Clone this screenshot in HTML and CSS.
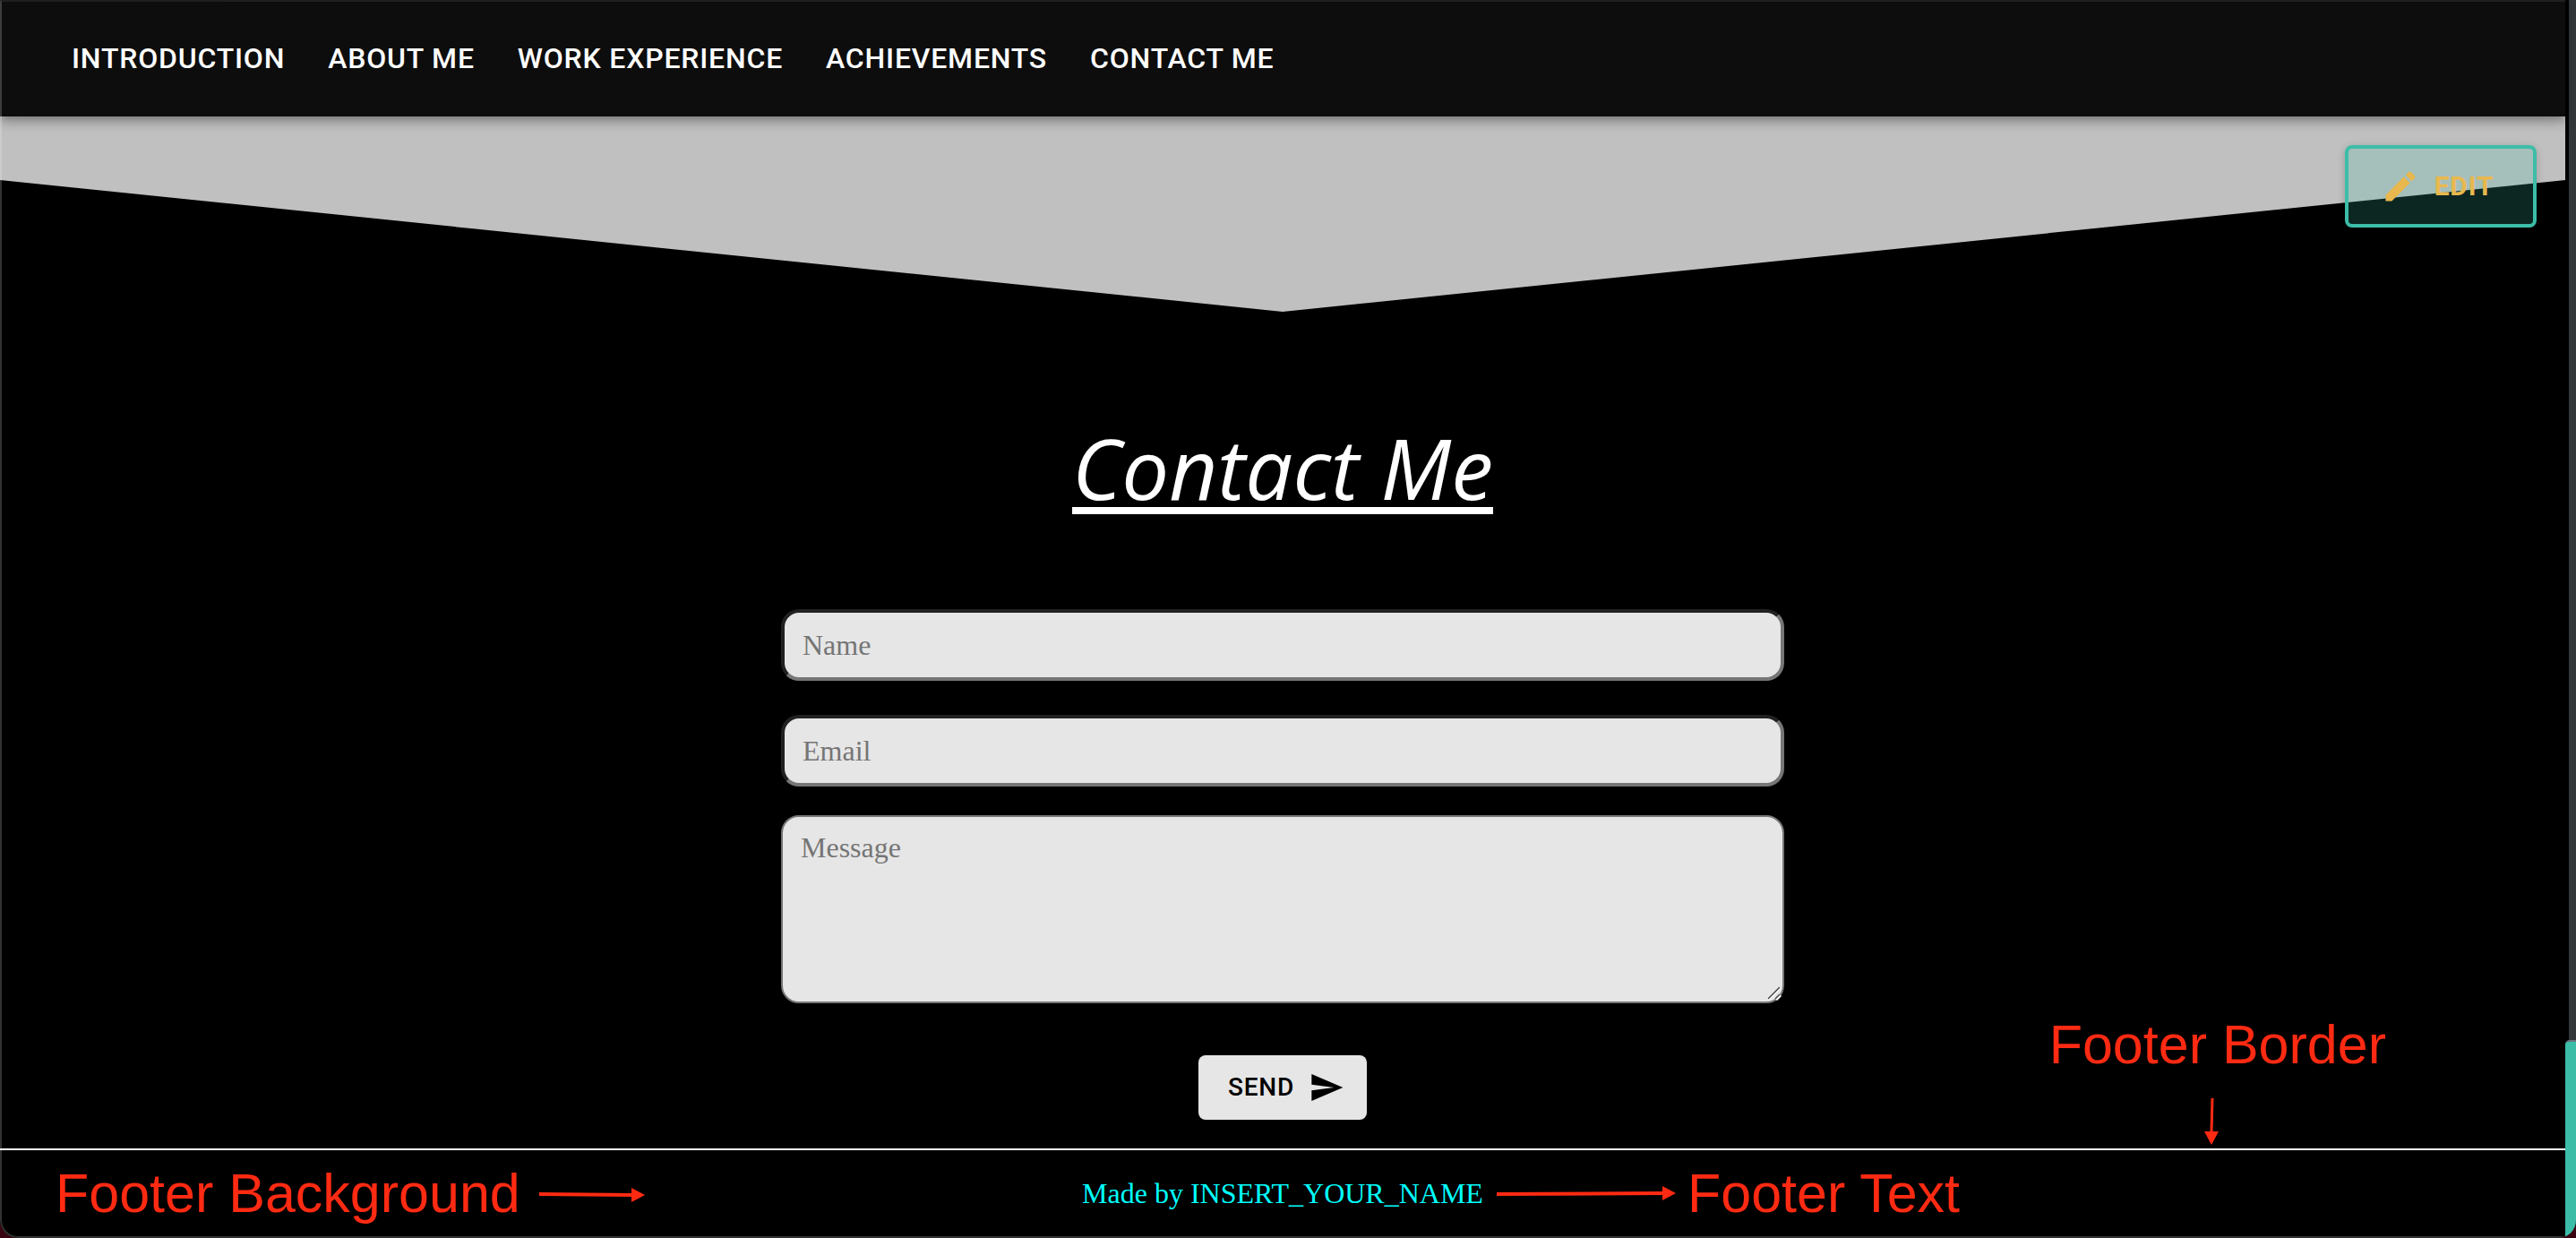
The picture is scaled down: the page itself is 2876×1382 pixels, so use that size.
FILE: index.html
```html
<!DOCTYPE html>
<html lang="en">
<head>
<meta charset="utf-8">
<title>Contact Me</title>
<link rel="stylesheet" href="styles.css">
</head>
<body>
<div class="window">
  <div class="page">
    <header class="navbar">
      <nav class="nav-links">
        <a href="#introduction">INTRODUCTION</a>
        <a href="#about">ABOUT ME</a>
        <a href="#work">WORK EXPERIENCE</a>
        <a href="#achievements">ACHIEVEMENTS</a>
        <a href="#contact">CONTACT ME</a>
      </nav>
    </header>

    <main class="contact" id="contact">
      <svg class="divider" viewBox="0 0 2864 218" preserveAspectRatio="none" aria-hidden="true">
        <path d="M0 0H2864V71L1432 218L0 71Z" fill="#c0c0c0"/>
      </svg>
      <button class="edit-button" type="button">
        <svg class="edit-icon" viewBox="0 0 24 24" aria-hidden="true"><path fill="currentColor" d="M3 17.250V21h3.750L17.810 9.940l-3.750-3.750L3 17.250zM20.710 7.040c.39-.39.39-1.020 0-1.410l-2.340-2.340a.996.996 0 0 0-1.410 0l-1.830 1.830 3.750 3.750 1.830-1.830z"/></svg>
        EDIT
      </button>

      <h1 class="title">Contact Me</h1>

      <form class="contact-form">
        <input class="field" type="text" name="name" placeholder="Name" aria-label="Name">
        <input class="field" type="email" name="email" placeholder="Email" aria-label="Email">
        <div class="message-box">
          <textarea class="field message" name="message" placeholder="Message" aria-label="Message"></textarea>
          <svg class="grip" viewBox="0 0 16 16" aria-hidden="true"><path d="M1 15L15 1M10 15L15 10" stroke="#fff" stroke-width="3"/><path d="M1 14L14 1M9 14L14 9" stroke="#444" stroke-width="1.500"/></svg>
        </div>
        <button class="send-button" type="submit">
          SEND
          <svg class="send-icon" viewBox="0 0 24 24" aria-hidden="true"><path fill="currentColor" d="M2.010 21L23 12 2.010 3 2 10l15 2-15 2z"/></svg>
        </button>
      </form>
    </main>

    <footer class="footer">
      <p class="credit">Made by INSERT_YOUR_NAME</p>

      <span class="note note-background">Footer Background</span>
      <svg class="arrow arrow-background" viewBox="0 0 118 16" aria-hidden="true"><path d="M0 7L104 8" stroke="currentColor" stroke-width="4"/><path d="M103 0L118 8L103 16Z" fill="currentColor"/></svg>

      <svg class="arrow arrow-text" viewBox="0 0 200 16" aria-hidden="true"><path d="M0 9L186 8" stroke="currentColor" stroke-width="4"/><path d="M185 0L200 8L185 16Z" fill="currentColor"/></svg>
      <span class="note note-text">Footer Text</span>

      <span class="note note-border">Footer Border</span>
      <svg class="arrow arrow-border" viewBox="0 0 16 52" aria-hidden="true"><path d="M9 0L8 38" stroke="currentColor" stroke-width="3"/><path d="M0 37H16L8 52Z" fill="currentColor"/></svg>
    </footer>
  </div>

  <div class="scrollbar" aria-hidden="true"><div class="thumb"></div></div>
</div>
</body>
</html>
```
FILE: styles.css
```css
* {
  box-sizing: border-box;
}

body {
  margin: 0;
  background: #3a0512;
}

.window {
  position: relative;
  display: grid;
  grid-template-columns: 1fr 12px;
  min-height: 100vh;
  overflow: hidden;
  background: #000;
  border-radius: 0 0 20px 20px;
}

/* thin light rim round the window */
.window::after {
  content: "";
  position: absolute;
  z-index: 2;
  inset: 0 12px 0 0;
  border: 2px solid rgba(255, 255, 255, 0.2);
  border-top-color: rgba(255, 255, 255, 0.08);
  border-right: 0;
  border-bottom-left-radius: 20px;
  pointer-events: none;
}

.page {
  display: flex;
  flex-direction: column;
}

.navbar {
  position: relative;
  z-index: 1;
  display: flex;
  align-items: center;
  height: 130px;
  padding: 0 80px;
  background: #0d0d0d;
  box-shadow: 0 4px 8px -2px rgba(0, 0, 0, 0.2), 0 8px 10px rgba(0, 0, 0, 0.14), 0 2px 20px rgba(0, 0, 0, 0.12);
}

.nav-links {
  display: flex;
  gap: 48px;
}

.nav-links a {
  color: #fff;
  font: 500 32px/40px Roboto, sans-serif;
  letter-spacing: 0.025em;
  text-decoration: none;
}

.contact {
  position: relative;
  flex: 1;
  display: flex;
  flex-direction: column;
  align-items: center;
}

.divider {
  display: block;
  width: 100%;
  height: 218px;
}

.edit-button {
  position: absolute;
  top: 32px;
  right: 32px;
  display: flex;
  align-items: center;
  justify-content: center;
  gap: 16px;
  width: 214px;
  height: 92px;
  padding: 0 8px 0 0;
  border: 4px solid #3cbda8;
  border-radius: 8px;
  background: rgba(60, 189, 168, 0.2);
  box-shadow: 0 2px 10px rgba(0, 0, 0, 0.2);
  color: #e8b84e;
  font: 700 30px/40px Roboto, sans-serif;
  letter-spacing: 0.02857em;
}

.edit-icon {
  width: 44px;
  height: 44px;
}

.title {
  margin: 118px 0 102px;
  color: #fff;
  font: italic 400 94px/112px "Open Sans", sans-serif;
  text-decoration: underline;
  text-decoration-thickness: 8px;
  text-underline-offset: 8px;
  text-decoration-skip-ink: none;
}

.contact-form {
  display: flex;
  flex-direction: column;
  align-items: center;
  width: 1120px;
  max-width: 100%;
}

.field {
  display: block;
  width: 100%;
  height: 80px;
  margin: 0 0 38px;
  padding: 0 20px;
  border: 4px solid #767676;
  border-top-color: #212121;
  border-left-color: #212121;
  border-radius: 20px;
  background: #e6e6e6;
  color: #000;
  font: 32px/36px "Liberation Serif", serif;
}

.field::placeholder {
  color: #757575;
  opacity: 1;
}

.message-box {
  position: relative;
  width: 100%;
  margin: -6px 0 58px;
}

.message {
  height: 210px;
  margin: 0;
  padding: 16px 20px;
  border: 2px solid #767676;
  resize: none;
}

.grip {
  position: absolute;
  right: 3px;
  bottom: 3px;
  width: 16px;
  height: 16px;
}

.send-button {
  display: flex;
  align-items: center;
  gap: 16px;
  height: 72px;
  padding: 0 25px 0 33px;
  border: 0;
  border-radius: 8px;
  background: #e6e6e6;
  color: #000;
  font: 500 28px/40px Roboto, sans-serif;
  letter-spacing: 0.02857em;
}

.send-icon {
  width: 40px;
  height: 40px;
}

.footer {
  position: relative;
  height: 100px;
  margin-top: 32px;
  border-top: 2px solid #fff;
}

.credit {
  margin: 0;
  padding-top: 30px;
  color: #0ff;
  font: 32px/36px "Liberation Serif", serif;
  text-align: center;
}

/* callouts laid over the page */
.note,
.arrow {
  position: absolute;
  color: #ff2a12;
}

.note {
  font: 61px/72px "Liberation Sans", sans-serif;
  white-space: nowrap;
}

.note-background {
  top: 12px;
  left: 62px;
}

.note-text {
  top: 12px;
  left: 1884px;
}

.note-border {
  top: -154px;
  right: 200px;
}

.arrow-background {
  top: 42px;
  left: 602px;
  width: 118px;
}

.arrow-text {
  top: 40px;
  left: 1671px;
  width: 200px;
}

.arrow-border {
  top: -58px;
  right: 387px;
  width: 16px;
}

.scrollbar {
  display: flex;
  flex-direction: column;
  justify-content: flex-end;
  background: linear-gradient(90deg, #000 4px, #33373a 4px);
}

.thumb {
  height: 221px;
  border-top: 2px solid #6c7480;
  border-radius: 8px 0 16px 4px;
  background: #3cbda8;
}
```
